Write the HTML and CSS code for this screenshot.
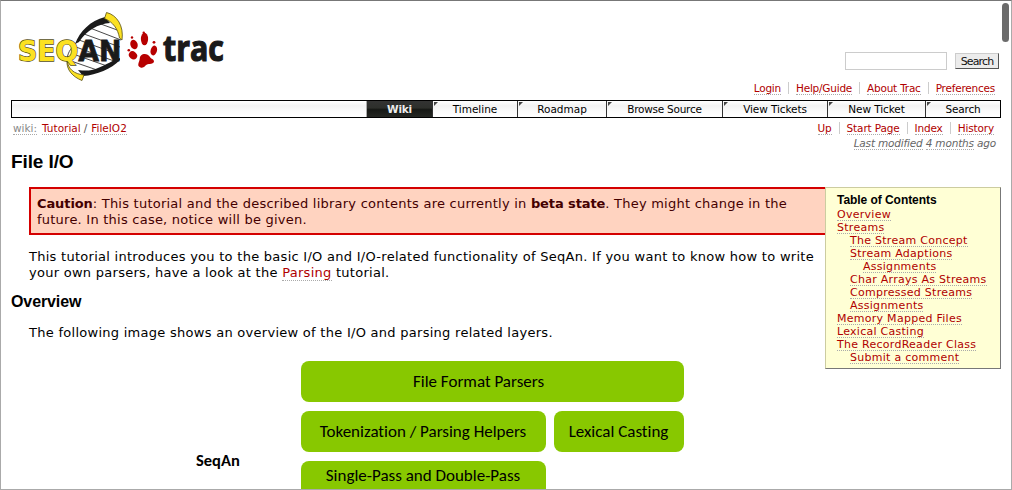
FILE: index.html
```html
<!DOCTYPE html>
<html lang="en">
<head>
<meta charset="utf-8">
<title>Tutorial/FileIO2 – SeqAn</title>
<link rel="stylesheet" href="styles.css">
</head>
<body>
<div class="window">
  <span class="scrollbar"></span>
  <header class="banner">
    <svg class="logo" width="228" height="80" viewBox="12 6 228 80" role="img" aria-label="SeqAn trac">
      <path d="M68 62C70 44 86 27 107 18L121 37C121 56 106 70 82 75Z" fill="#fff"/>
      <g stroke="#333" stroke-width=".9" fill="none">
        <path d="M98 23l22 8M90 28l31 12M84 34l36 13M79 40l38 14M76 47l38 14M73 54l34 12M71 61l29 10"/>
        <path d="M76 43C70 49 67 54 67 61"/>
      </g>
      <path d="M75 44C80 31 90 21 105 17L110 23C98 24 87 30 79 42Z" fill="#1a1a1a"/>
      <path d="M120 58C113 60 106 65 98 68C91 71 86 71 78 70L83 76C97 75 111 69 120 60Z" fill="#1a1a1a"/>
      <path d="M106.500 12.500C117 15 124 26 122 40L119.500 38C118 29 113 22 104.500 18.500Z" fill="#fbe122" stroke="#554d14" stroke-width=".8"/>
      <path d="M67 60C68 69 74 74 84 75L82 80.500C73 77 66 70 67 60Z" fill="#fbe122" stroke="#554d14" stroke-width=".8"/>
      <text class="logo-seq" x="18" y="61" textLength="103.500" lengthAdjust="spacingAndGlyphs">SEQ<tspan class="logo-an">AN</tspan></text>
      <g fill="#b70000">
        <ellipse cx="144.500" cy="39" rx="3.600" ry="6.300"/>
        <ellipse cx="134" cy="44.500" rx="3.600" ry="4.800" transform="rotate(-20 134 44.500)"/>
        <ellipse cx="153.800" cy="50.500" rx="3.200" ry="5" transform="rotate(15 153.800 50.500)"/>
        <ellipse cx="133" cy="55.300" rx="4.400" ry="3.700" transform="rotate(40 133 55.300)"/>
        <path d="M141 55.500C144 53 148 54 150 57C151 59 154 59 154 61.500C153.500 64.500 149 63.500 147 64.500C145 65.500 144 68.500 140.500 67.500C136.500 66 139 62.500 139.500 60C140 58 139.500 57 141 55.500Z"/>
        <circle cx="143.700" cy="32.800" r="1.200"/><circle cx="132" cy="37.500" r="1.200"/><circle cx="154" cy="42.300" r="1.400"/><circle cx="128.800" cy="50.300" r="1.300"/>
      </g>
      <text class="logo-trac" x="163" y="61" textLength="61" lengthAdjust="spacingAndGlyphs">trac</text>
    </svg>
    <form class="search">
      <input class="search-field" type="text" aria-label="Search">
      <button class="search-button" type="button">Search</button>
    </form>
  </header>
  <nav class="links meta">
    <a>Login</a><a>Help/Guide</a><a>About Trac</a><a>Preferences</a>
  </nav>
  <nav class="mainnav">
    <a class="tab tab-wiki">Wiki</a><a class="tab tab-timeline">Timeline</a><a class="tab tab-roadmap">Roadmap</a><a class="tab tab-browse">Browse Source</a><a class="tab tab-view">View Tickets</a><a class="tab tab-new">New Ticket</a><a class="tab tab-search">Search</a>
  </nav>
  <div class="context">
    <div class="path"><a class="path-root">wiki:</a><a>Tutorial</a><span>/</span><a>FileIO2</a></div>
    <nav class="links ctx"><a>Up</a><a>Start Page</a><a>Index</a><a>History</a></nav>
  </div>
  <p class="modified"><a>Last modified</a> <a>4 months</a> ago</p>
  <h1>File I/O</h1>
  <div class="columns">
    <main>
      <div class="caution"><b>Caution</b>: This tutorial and the described library contents are currently in <b>beta state</b>. They might change in the<br>future. In this case, notice will be given.</div>
      <p class="intro">This tutorial introduces you to the basic I/O and I/O-related functionality of SeqAn. If you want to know how to write<br>your own parsers, have a look at the <a>Parsing</a> tutorial.</p>
      <h2>Overview</h2>
      <p class="following">The following image shows an overview of the I/O and parsing related layers.</p>
      <div class="diagram">
        <b class="group">SeqAn</b>
        <div class="layers">
          <div class="layer wide">File Format Parsers</div>
          <div class="layer">Tokenization / Parsing Helpers</div>
          <div class="layer">Lexical Casting</div>
          <div class="layer tall">Single-Pass and Double-Pass</div>
        </div>
      </div>
    </main>
    <aside class="toc">
      <h4>Table of Contents</h4>
      <ul>
        <li><a>Overview</a></li>
        <li><a>Streams</a></li>
        <li class="in1"><a>The Stream Concept</a></li>
        <li class="in1"><a>Stream Adaptions</a></li>
        <li class="in2"><a>Assignments</a></li>
        <li class="in1"><a>Char Arrays As Streams</a></li>
        <li class="in1"><a>Compressed Streams</a></li>
        <li class="in1"><a>Assignments</a></li>
        <li><a>Memory Mapped Files</a></li>
        <li><a>Lexical Casting</a></li>
        <li><a>The RecordReader Class</a></li>
        <li class="in1"><a>Submit a comment</a></li>
      </ul>
    </aside>
  </div>
</div>
</body>
</html>
```
FILE: styles.css
```css
* { box-sizing: border-box; }
body { margin: 0; background: #fff; color: #000; font: 13px/16px Verdana, "DejaVu Sans", sans-serif; }
h1, h2, h4, p, ul { margin: 0; padding: 0; }
a { color: #b00000; border-bottom: 1px dotted #aaa; white-space: nowrap; }

.window { position: relative; height: 490px; overflow: hidden; padding: 0 10px; border: 1px solid #aaa; border-top-color: #777; }
.scrollbar { position: absolute; top: 2px; right: 2px; width: 7px; height: 39px; border-radius: 4px; background: #6b6b6b; }

.banner { display: flex; justify-content: space-between; height: 80px; padding: 5px 2px 0 1px; }
.logo { display: block; overflow: visible; }
.logo text { font-weight: bold; paint-order: stroke; }
.logo-seq { font-family: "DejaVu Sans", sans-serif; font-size: 29px; fill: #fbe122; stroke: #554d14; stroke-width: 1.4px; }
.logo-an { fill: #1a1a1a; stroke: #1a1a1a; stroke-width: .8px; }
.logo-trac { font-family: "Open Sans", sans-serif; font-size: 35px; fill: #1a1a1a; stroke: #1a1a1a; stroke-width: 1.2px; }
.search { display: flex; gap: 8px; padding-top: 46px; }
.search-field { width: 102px; height: 18px; padding: 0; border: 1px solid #ccc; background: #fff; }
.search-button { width: 44px; height: 16px; margin-top: 1px; padding: 0; border: 1px solid #ccc; border-right-color: #555; border-bottom-color: #555; background: #ececec; color: #111; font: 11px/13px "DejaVu Sans", sans-serif; letter-spacing: -.85px; }

.links { display: flex; justify-content: flex-end; font-size: 10.500px; line-height: 12px; letter-spacing: -.22px; }
.links a { height: 13px; }
.links a + a { margin-left: 15px; position: relative; }
.links a + a::before { content: ""; position: absolute; left: -8px; top: 0; height: 12px; border-left: 1px solid #ccc; }
.meta { height: 19px; padding: 1px 6px 0 0; }
.ctx { letter-spacing: -.15px; }

.mainnav { display: flex; justify-content: flex-end; height: 18px; border: 1px solid #000; background: linear-gradient(#fff, #f2f2f2 30%, #fafafa 60%, #fff); }
.tab { position: relative; height: 16px; border: 0; border-left: 1px solid #333; color: #000; font-size: 10.500px; line-height: 17px; text-align: center; }
.tab:not(.tab-wiki)::before { content: ""; position: absolute; left: 1px; top: 1px; border-top: 4px solid #444; border-right: 4px solid transparent; }
.tab-wiki { width: 66px; border-left-color: #aaa; background: linear-gradient(#333, #2d2f2b 45%, #161815 50%, #252723); color: #eee; font-weight: bold; letter-spacing: -.2px; }
.tab-timeline { width: 85px; }
.tab-roadmap { width: 89px; }
.tab-browse { width: 116px; letter-spacing: -.25px; }
.tab-view { width: 105px; letter-spacing: -.1px; }
.tab-new { width: 98px; letter-spacing: -.1px; }
.tab-search { width: 75px; letter-spacing: -.2px; }

.context { display: flex; justify-content: space-between; height: 17px; padding: 4px 7px 0 2px; }
.path { display: flex; font-size: 10.500px; line-height: 12px; }
.path a { height: 13px; }
.path span { margin: 0 4px 0 3px; color: #555; }
.path .path-root { margin-right: 5px; color: #888; }
.modified { height: 17px; padding: 2px 5px 0 0; color: #666; font-size: 10.500px; font-style: italic; line-height: 12px; letter-spacing: -.18px; text-align: right; }
.modified a { color: #666; }

h1 { height: 35px; font: bold 19px/20px "Liberation Sans", Arial, sans-serif; letter-spacing: -.1px; }
.columns { display: grid; grid-template-columns: 814px 176px; align-items: start; }
main { letter-spacing: .275px; }
.caution { height: 48px; margin-left: 18px; padding: 7px 6px; border: 2px solid #d40000; border-right: 0; background: #ffd3c0; color: #400; letter-spacing: .235px; white-space: nowrap; }
.caution b { letter-spacing: -.1px; }
.intro, .following { padding-left: 18px; white-space: nowrap; }
.intro { margin-top: 14px; }
h2 { margin-top: 11px; font: bold 16px/20px "Liberation Sans", Arial, sans-serif; letter-spacing: -.1px; }
.following { margin-top: 13px; }

.toc { height: 182px; padding: 4px 0 0 11px; border: 1px solid #cccca0; border-right-color: #777; border-bottom-color: #777; background: #ffffd5; }
.toc h4 { font: bold 12px/16px "Liberation Sans", Arial, sans-serif; letter-spacing: -.05px; }
.toc ul { list-style: none; font-size: 11px; line-height: 13px; letter-spacing: .27px; }
.toc li { height: 13px; }
.toc a { display: inline-block; height: 12px; line-height: 11px; }
.in1 { padding-left: 13px; }
.in2 { padding-left: 26px; }

.diagram { display: flex; margin-top: 20px; padding-left: 185px; font: 17px/20px Calibri, Carlito, "Open Sans", sans-serif; font-variant-ligatures: none; letter-spacing: 0; white-space: nowrap; }
.group { width: 104.500px; padding-top: 89px; font-size: 16.500px; }
.layers { display: grid; grid-template-columns: 245px 130px; gap: 9px 8px; }
.layer { display: flex; justify-content: center; align-items: center; height: 41px; border-radius: 8px; background: #88c800; }
.wide { grid-column: 1 / 3; padding-right: 27px; }
.tall { height: 80px; padding-top: 5px; align-items: flex-start; }
```
